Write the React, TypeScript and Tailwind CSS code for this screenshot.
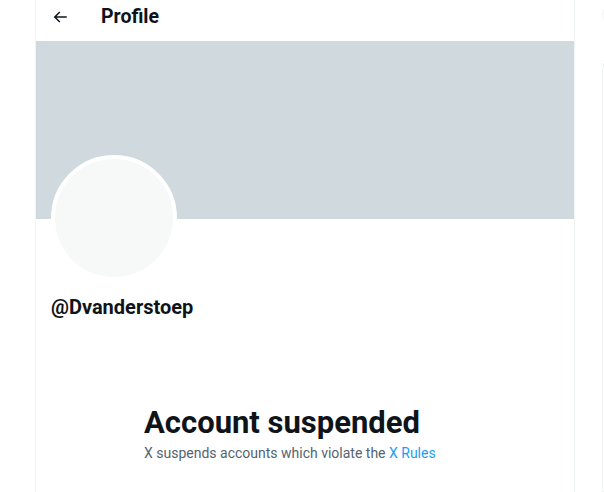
import React from "react";

export default function App() {
  const font = { fontFamily: "Roboto, 'Noto Sans', sans-serif" };
  return (
    <div className="flex h-[492px] w-[604px] overflow-hidden bg-white" style={font}>
      <div className="w-[35px] shrink-0" />
      <main className="flex w-[540px] shrink-0 flex-col border-x border-[#eff3f4]">
        <div className="flex h-[41px] items-center pb-[7px]">
          <div className="ml-[6px] flex h-[36px] w-[36px] items-center justify-center">
            <svg viewBox="0 0 24 24" width="18" height="18" fill="#0f1419">
              <path d="M7.414 13l5.043 5.04-1.414 1.42L3.586 12l7.457-7.46 1.414 1.42L7.414 11H21v2H7.414z" />
            </svg>
          </div>
          <h2 className="ml-[23px] text-[19.5px] font-bold leading-none text-[#0f1419]">Profile</h2>
        </div>
        <div className="h-[178px] bg-[#cfd9de]" />
        <div className="px-[15px]">
          <div className="-mt-[64px] h-[126px] w-[126px] rounded-full border-[4px] border-white bg-[#f7f9f9]" />
          <div className="mt-[14px] text-[20px] font-bold leading-[24px] text-[#0f1419]">@Dvanderstoep</div>
        </div>
        <div className="ml-[108px] mt-[86px]">
          <div className="text-[31px] font-bold leading-[36px] text-[#0f1419]">Account suspended</div>
          <p className="mt-[2px] text-[14px] leading-[20px] text-[#536471]">
            X suspends accounts which violate the <span className="text-[#1d9bf0]">X Rules</span>
          </p>
        </div>
      </main>
      <div className="ml-[27px] flex flex-col">
        <div className="mt-[5px] h-[22px] w-[20px] rounded-l-full border border-[#eff3f4]" />
        <div className="mt-[30px] h-[500px] w-[20px] rounded-tl-[16px] border border-[#eff3f4]" />
      </div>
    </div>
  );
}
